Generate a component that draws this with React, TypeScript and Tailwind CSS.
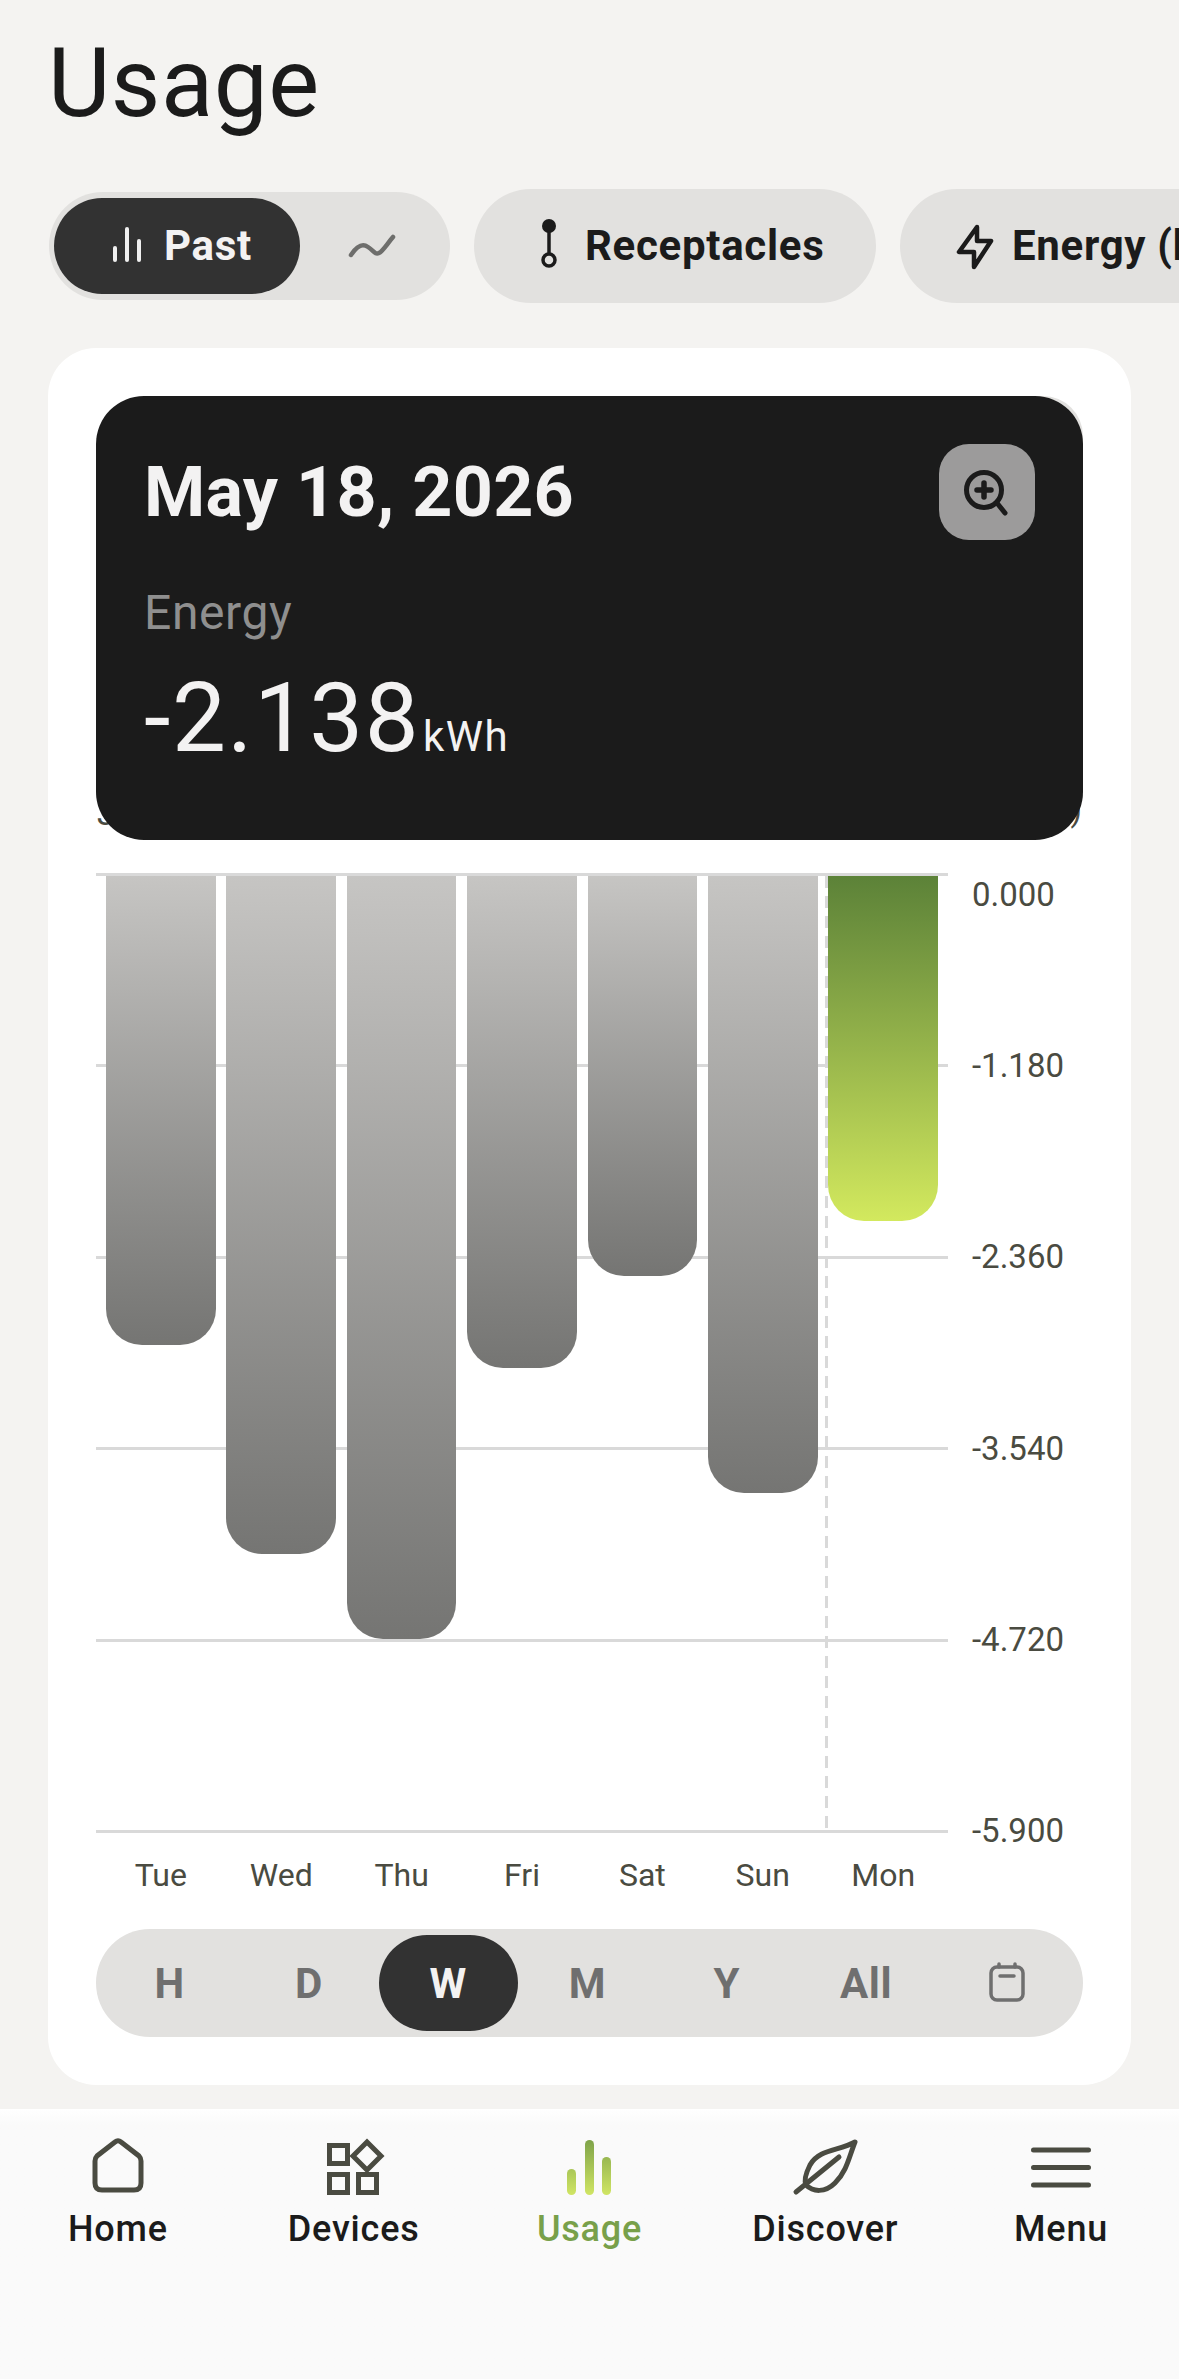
import type { ReactNode } from "react";

const BARS = [
  { day: "Tue", height: 469 },
  { day: "Wed", height: 678 },
  { day: "Thu", height: 763 },
  { day: "Fri", height: 492 },
  { day: "Sat", height: 400 },
  { day: "Sun", height: 617 },
  { day: "Mon", height: 345, active: true },
];

const TICKS = ["0.000", "-1.180", "-2.360", "-3.540", "-4.720", "-5.900"];
const RANGES = ["H", "D", "W", "M", "Y", "All"];

function NavItem({ label, active, children }: { label: string; active?: boolean; children: ReactNode }) {
  return (
    <div className="flex flex-col items-center">
      <svg width="72" height="72" viewBox="0 0 72 72" fill="none" stroke="#4a4b41" strokeWidth="5">
        {children}
      </svg>
      <span className={`mt-[6px] text-[36px] leading-[44px] font-medium tracking-[0.8px] ${active ? "text-[#78a04a]" : "text-[#1b1b1b]"}`}>
        {label}
      </span>
    </div>
  );
}

export default function App() {
  return (
    <div className="flex h-[2379px] w-[1179px] flex-col overflow-hidden bg-[#f4f3f1] font-['Roboto',sans-serif]">
      <h1 className="pl-[48px] pt-[27px] text-[96px] leading-[112px] font-normal tracking-[0.6px] text-[#1b1b1b]">Usage</h1>

      {/* FILTERS */}
      <div className="mt-[50px] flex items-center gap-[24px] pl-[49px]">
        <div className="flex h-[108px] w-[401px] shrink-0 items-center rounded-full bg-[#e2e1df] pl-[5px]">
          <div className="flex h-[96px] w-[246px] items-center rounded-full bg-[#323232] pl-[56px]">
            <svg width="34" height="38" viewBox="0 0 34 38" fill="#f0f0f0" className="mr-[20px] shrink-0">
              <rect x="3" y="19" width="4" height="16" rx="2" />
              <rect x="15" y="0" width="4" height="35" rx="2" />
              <rect x="27" y="12" width="4" height="23" rx="2" />
            </svg>
            <span className="text-[42px] leading-none font-bold tracking-[0.7px] text-[#f3f2f2]">Past</span>
          </div>
          <svg width="50" height="30" viewBox="0 0 50 30" fill="none" stroke="#6e6e6c" strokeWidth="4.5" strokeLinecap="round" strokeLinejoin="round" className="ml-[47px]">
            <path d="M4 24C10 15 15 12 21 16C27 20 28 24 32 22C36 20 40 13 46 6" />
          </svg>
        </div>

        <div className="flex h-[114px] w-[402px] shrink-0 items-center rounded-full bg-[#e2e1df] pl-[59px]">
          <svg width="32" height="56" viewBox="0 0 32 56" fill="none" stroke="#1b1b1b" className="mr-[20px] shrink-0">
            <circle cx="16" cy="8" r="7" fill="#1b1b1b" stroke="none" />
            <path d="M16 12V36" strokeWidth="3.5" />
            <circle cx="16" cy="42" r="6" strokeWidth="3.5" />
          </svg>
          <span className="text-[42px] leading-none font-bold tracking-[0.7px] text-[#1b1b1b]">Receptacles</span>
        </div>

        <div className="flex h-[114px] w-[420px] shrink-0 items-center rounded-l-full bg-[#e2e1df] pl-[50px]">
          <svg width="50" height="50" viewBox="0 0 50 50" fill="none" stroke="#1b1b1b" strokeWidth="4.5" strokeLinejoin="round" className="mr-[12px] shrink-0">
            <path d="M27 6L9 31H24V46L41 20H27Z" />
          </svg>
          <span className="text-[42px] leading-none font-bold tracking-[0.7px] whitespace-nowrap text-[#1b1b1b]">Energy (kWh)</span>
        </div>
      </div>

      {/* CARD */}
      <div className="mx-[48px] mt-[45px] h-[1737px] shrink-0 rounded-[48px] bg-white p-[48px]">
        <div className="relative h-[444px]">
          <div className="absolute top-0 right-0 h-[48px] w-[60px] rounded-tr-[40px] bg-[#e2e1df]" />
          <span className="absolute bottom-[10px] left-[1px] text-[33px] leading-none text-[#4a4b41]">J</span>
          <span className="absolute right-[1px] bottom-[14px] text-[33px] leading-none text-[#4a4b41]">)</span>
          <div className="relative h-full rounded-[48px] bg-[#1b1b1b] p-[48px]">
            <div className="flex items-start justify-between">
              <span className="mt-[8px] text-[70px] leading-[80px] font-bold tracking-[0.3px] text-[#f3f2f2]">May 18, 2026</span>
              <div className="flex h-[96px] w-[96px] items-center justify-center rounded-[30px] bg-[#9c9b9b]">
                <svg width="60" height="60" viewBox="0 0 60 60" fill="none" stroke="#1b1b1b" strokeWidth="5" strokeLinecap="round">
                  <circle cx="27" cy="28" r="17.5" />
                  <path d="M27 21V35M20 28H34" strokeWidth="5.5" />
                  <path d="M40 41L48 51" />
                </svg>
              </div>
            </div>
            <p className="mt-[47px] text-[48px] leading-[52px] tracking-[0.6px] text-[#8f8f8f]">Energy</p>
            <p className="mt-[23px] flex items-baseline text-[96px] leading-[112px] tracking-[1.4px] text-[#f3f2f2]">
              -2.138
              <span className="ml-[3px] text-[42px] leading-none tracking-[1.5px]">kWh</span>
            </p>
          </div>
        </div>

        {/* CHART */}
        <div className="mt-[33px] flex h-[960px] items-stretch">
          <div className="relative h-full w-[852px] shrink-0">
            <div className="absolute inset-0 flex flex-col justify-between">
              {TICKS.map((tick) => (
                <div key={tick} className="h-[3px] w-full bg-[#d9d9d9]" />
              ))}
            </div>
            <div className="absolute top-[3px] bottom-[3px] left-[729px] w-[3px] bg-[repeating-linear-gradient(to_bottom,#d9d9d9_0,#d9d9d9_12px,transparent_12px,transparent_20px)]" />
            <div className="relative grid h-full grid-cols-7 items-start gap-x-[10.7px] px-[10px] pt-[3px]">
              {BARS.map((bar) => (
                <div
                  key={bar.day}
                  style={{ height: bar.height }}
                  className={`rounded-b-[36px] bg-gradient-to-b ${bar.active ? "from-[#5c8238] to-[#d3e95e]" : "from-[#c6c5c3] to-[#757573]"}`}
                />
              ))}
            </div>
          </div>
          <div className="ml-[24px] flex h-full flex-col justify-between">
            {TICKS.map((tick, i) => (
              <span
                key={tick}
                className={`flex h-[3px] items-center text-[33px] leading-[36px] whitespace-nowrap text-[#4a4b41] ${i === 0 ? "translate-y-[20px]" : ""}`}
              >
                {tick}
              </span>
            ))}
          </div>
        </div>

        <div className="mt-[22px] grid w-[852px] grid-cols-7 gap-x-[10.7px] px-[10px]">
          {BARS.map((bar) => (
            <span key={bar.day} className="text-center text-[32px] leading-[40px] text-[#4a4b41]">
              {bar.day}
            </span>
          ))}
        </div>

        {/* RANGE */}
        <div className="mt-[34px] grid h-[108px] grid-cols-7 items-center rounded-full bg-[#e2e1df] pr-[8px] pl-[4px]">
          {RANGES.map((range) => (
            <div
              key={range}
              className={`flex h-[96px] items-center justify-center rounded-full text-[42px] font-bold tracking-[0.5px] ${range === "W" ? "bg-[#323232] text-[#f3f2f2]" : "text-[#6f6f6f]"}`}
            >
              {range}
            </div>
          ))}
          <div className="ml-[3px] flex items-center justify-center">
            <svg width="48" height="48" viewBox="0 0 48 48" fill="none" stroke="#6f6f6f" strokeWidth="3.5" strokeLinecap="round">
              <rect x="8" y="8" width="32" height="33" rx="6" />
              <path d="M16 5V8M32 5V8M17 17H31" />
            </svg>
          </div>
        </div>
      </div>

      {/* BOTTOM NAV */}
      <nav className="mt-[24px] grid flex-1 grid-cols-5 content-start bg-gradient-to-b from-white to-[#fafafa] to-[16px] pt-[20px]">
        <NavItem label="Home">
          <path d="M33 13L15 27Q13 29 13 32V54Q13 61 20 61H52Q59 61 59 54V32Q59 29 57 27L39 13Q36 10.5 33 13Z" />
        </NavItem>
        <NavItem label="Devices">
          <rect x="11.5" y="16.5" width="18" height="18" />
          <rect x="11.5" y="45.5" width="18" height="18" />
          <rect x="40.5" y="45.5" width="18" height="18" />
          <path d="M49 13L63 27L49 41L35 27Z" />
        </NavItem>
        <NavItem label="Usage" active>
          <defs>
            <linearGradient id="usageBars" x1="0" y1="11" x2="0" y2="66" gradientUnits="userSpaceOnUse">
              <stop offset="0" stopColor="#7fa349" />
              <stop offset="1" stopColor="#d0e564" />
            </linearGradient>
          </defs>
          <g fill="url(#usageBars)" stroke="none">
            <rect x="14" y="40" width="9" height="26" rx="4.5" />
            <rect x="32" y="11" width="9" height="55" rx="4.5" />
            <rect x="49" y="28" width="9" height="38" rx="4.5" />
          </g>
        </NavItem>
        <NavItem label="Discover">
          <g strokeLinecap="round" strokeLinejoin="round">
            <path d="M66 13C50 22 30 20 21 36C17 44 15 52 17 56C24 63 36 64 46 54C58 42 60 28 66 13Z" />
            <path d="M7 63L50 28" />
          </g>
        </NavItem>
        <NavItem label="Menu">
          <path d="M8.5 21H63.5M8.5 38.5H63.5M8.5 56H63.5" strokeLinecap="round" />
        </NavItem>
      </nav>
    </div>
  );
}
